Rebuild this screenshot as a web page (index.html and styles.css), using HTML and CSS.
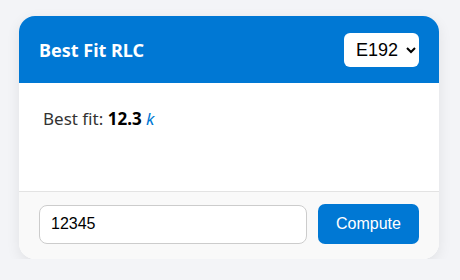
FILE: index.html
```html
<!DOCTYPE html>
<html lang="en">
<head>
  <meta charset="UTF-8" />
  <title>Best Fit RLC</title>
  <link rel="stylesheet" href="styles.css">
</head>
<body>
  <div class="rlc-card">
    <div class="rlc-header">
      <div class="rlc-title">Best Fit RLC</div>
      <select class="rlc-series">
        <option>E192</option>
        <option>E96</option>
        <option>E48</option>
        <option>E24</option>
        <option>E12</option>
      </select>
    </div>
    <div class="rlc-body">
      Best fit: <b class="rlc-value">12.3</b> <i class="rlc-unit">k</i>
    </div>
    <div class="rlc-footer">
      <input type="text" class="rlc-input" value="12345">
      <button class="rlc-btn">Compute</button>
    </div>
  </div>
</body>
</html>
```

FILE: styles.css
```css
body {
  margin: 0;
  padding: 16px 21px 0 19px;
  background: #f3f4f7;
  font-family: 'Noto Sans', 'Open Sans', sans-serif;
}

.rlc-card {
  width: 420px;
  background: #fff;
  border-radius: 16px;
  overflow: hidden;
  box-shadow: 0 4px 14px rgba(0, 0, 0, 0.08);
}

.rlc-header {
  box-sizing: border-box;
  height: 67px;
  padding: 0 20px;
  background: #0078d4;
  display: flex;
  align-items: center;
  justify-content: space-between;
}

.rlc-title {
  color: #fff;
  font-size: 18px;
  font-weight: bold;
}

.rlc-series {
  width: 75px;
  height: 34px;
  border: none;
  border-radius: 6px;
  padding: 0 4px 0 8px;
  background: #fff;
  color: #000;
  font-family: 'Liberation Sans', Arial, sans-serif;
  font-size: 18px;
}

.rlc-body {
  box-sizing: border-box;
  height: 108px;
  padding: 23px 24px;
  color: #333;
  font-size: 17px;
  line-height: 26px;
}

.rlc-value {
  color: #000;
}

.rlc-unit {
  color: #0078d4;
}

.rlc-footer {
  display: flex;
  align-items: center;
  gap: 11px;
  padding: 12px 20px 15px;
  background: #f9f9f9;
  border-top: 1px solid #e3e3e3;
}

.rlc-input {
  flex: 1;
  box-sizing: border-box;
  height: 39px;
  padding: 0 11px;
  border: 1px solid #ccc;
  border-radius: 8px;
  font-family: 'Liberation Sans', Arial, sans-serif;
  font-size: 16px;
  color: #000;
}

.rlc-btn {
  width: 101px;
  height: 40px;
  border: none;
  border-radius: 7px;
  background: #0078d4;
  color: #fff;
  font-family: 'Liberation Sans', Arial, sans-serif;
  font-size: 16px;
  cursor: pointer;
}
```
